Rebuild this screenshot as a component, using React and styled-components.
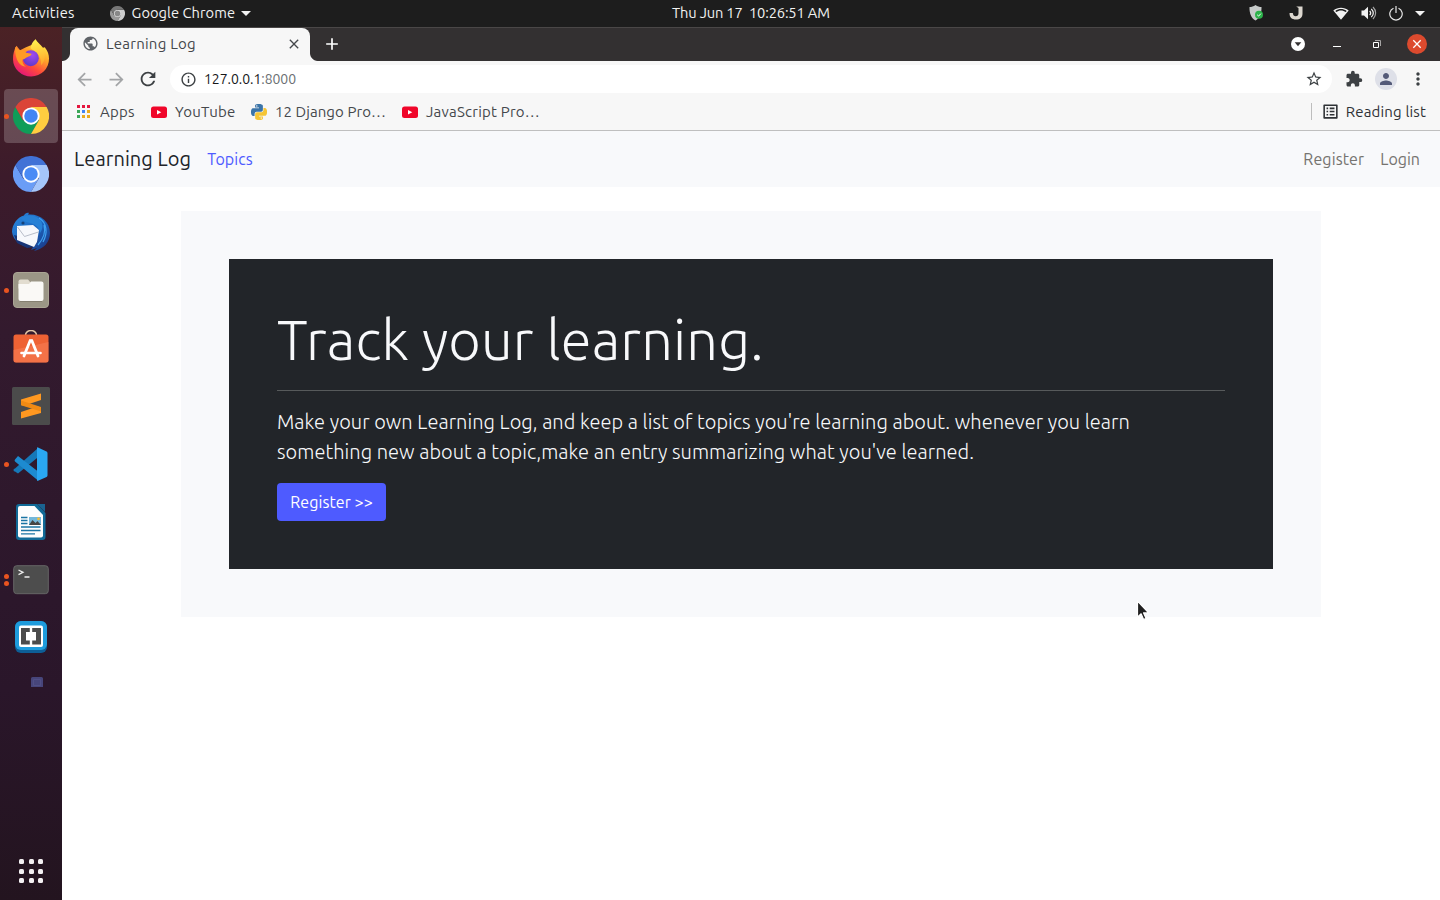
import React from 'react';
import styled, { createGlobalStyle } from 'styled-components';
import {
  MdArrowBack,
  MdArrowForward,
  MdRefresh,
  MdInfoOutline,
  MdStarBorder,
  MdExtension,
  MdPerson,
  MdMoreVert,
  MdPublic,
  MdListAlt,
  MdClose,
  MdAdd,
} from 'react-icons/md';

const GlobalStyle = createGlobalStyle`
  *, *::before, *::after { box-sizing: border-box; }
  body {
    margin: 0;
    background: #fff;
    font-family: "Ubuntu", "Noto Sans", sans-serif;
    overflow: hidden;
  }
  svg { display: block; flex: none; }
`;

const Desktop = styled.div`
  position: relative;
  display: flex;
  flex-direction: column;
  width: 1440px;
  height: 900px;
`;

const Label = styled.span`
  font-size: ${(p) => p.$size || 15}px;
  letter-spacing: ${(p) => p.$track || 0}px;
  white-space: pre;
`;

/* ---------- system bar ---------- */

const SystemBar = styled.header`
  display: grid;
  grid-template-columns: 600px 1fr 600px;
  align-items: center;
  height: 27px;
  background: #1d1d1d;
  color: #f2f2f2;
`;

const SystemLeft = styled.div`
  display: flex;
  align-items: center;
  padding-left: 12px;
`;

const SystemText = styled(Label)`
  padding-bottom: 2px;
`;

const AppMenu = styled.div`
  display: flex;
  align-items: center;
  gap: 6px;
  margin-left: 35px;
`;

const AppName = styled(SystemText)`
  padding-left: 1px;
`;

const Clock = styled.div`
  display: flex;
  padding-left: 72px;
`;

const Tray = styled.div`
  display: flex;
  justify-content: flex-end;
  align-items: center;
  padding: 0 15px 1px 0;
`;

const TrayCell = styled.div`
  display: flex;
  justify-content: center;
  width: ${(p) => p.$w}px;
  margin-right: ${(p) => p.$after || 0}px;
`;

const Workspace = styled.div`
  display: flex;
  flex: 1;
  min-height: 0;
`;

/* ---------- dock ---------- */

const Dock = styled.nav`
  display: flex;
  flex-direction: column;
  gap: 4px;
  width: 62px;
  padding: 4px 4px 2px;
  background: linear-gradient(#4b2225 0%, #3c1b2b 17%, #331a2e 35%, #2e182c 55%, #2a162a 76%, #23141f 100%);
`;

const DockItem = styled.div`
  position: relative;
  display: flex;
  align-items: center;
  justify-content: center;
  height: 54px;
  border-radius: 4px;
  background: ${(p) => (p.$active ? 'rgba(255, 255, 255, 0.2)' : 'transparent')};
`;

const Running = styled.div`
  position: absolute;
  left: 0;
  top: 0;
  bottom: 0;
  display: flex;
  flex-direction: column;
  justify-content: center;
  gap: 2px;
`;

const Dot = styled.i`
  width: 5px;
  height: 5px;
  border-radius: 50%;
  background: #e95420;
`;

const PendingItem = styled.div`
  display: flex;
  justify-content: flex-end;
  padding: 8px 15px 0 0;
`;

const AppGrid = styled.div`
  display: grid;
  grid-template-columns: repeat(3, 5px);
  gap: 4.5px;
  place-content: center;
  height: 54px;
  margin-top: auto;
`;

const GridDot = styled.i`
  width: 5px;
  height: 5px;
  border-radius: 1.5px;
  background: #f3f0f2;
`;

/* ---------- browser ---------- */

const Browser = styled.div`
  display: flex;
  flex-direction: column;
  flex: 1;
  background: #fff;
`;

const TabStrip = styled.div`
  display: flex;
  align-items: stretch;
  height: 34px;
  border-top: 1px solid #4a4747;
  background: #333031;
`;

const Flare = styled.div`
  align-self: flex-end;
  width: 8px;
  height: 8px;
  background: radial-gradient(
    circle at ${(p) => (p.$side === 'left' ? '0 0' : '100% 0')},
    transparent 7.5px,
    #f7f7f7 8.5px
  );
`;

const Tab = styled.div`
  display: flex;
  align-items: center;
  width: 240px;
  padding: 0 8px 2px 12px;
  border-radius: 8px 8px 0 0;
  background: #f7f7f7;
  color: #45484c;
`;

const TabTitle = styled(Label)`
  flex: 1;
  padding-left: 7px;
`;

const NewTab = styled.div`
  display: flex;
  align-items: center;
  padding: 0 0 2px 4px;
  color: #fff;
`;

const WindowControls = styled.div`
  display: flex;
  align-items: center;
  margin-left: auto;
  padding: 0 3px 1px 0;
`;

const ControlCell = styled.div`
  display: flex;
  justify-content: center;
  width: 40px;
  padding-left: ${(p) => p.$shift || 0}px;
`;

const Toolbar = styled.div`
  display: flex;
  align-items: center;
  height: 36px;
  padding: 0 6px;
  background: #f7f7f7;
  color: #3c4043;
`;

const ToolCell = styled.div`
  display: flex;
  align-items: center;
  justify-content: center;
  width: 32px;
  color: ${(p) => (p.$muted ? '#a3a5a7' : 'inherit')};
`;

const AddressBar = styled.div`
  display: flex;
  align-items: center;
  flex: 1;
  height: 28px;
  margin: 0 6px;
  padding: 0 9px 0 9.5px;
  border-radius: 14px;
  background: #fff;
`;

const Url = styled(Label)`
  flex: 1;
  padding-left: 7.5px;
  color: #6b6f73;
`;

const Host = styled.span`
  color: #17181a;
`;

const Avatar = styled.div`
  display: flex;
  align-items: center;
  justify-content: center;
  width: 22px;
  height: 22px;
  border-radius: 50%;
  background: #dee0e8;
  color: #545a78;
`;

const BookmarksBar = styled.div`
  display: flex;
  align-items: center;
  height: 34px;
  padding: 0 14px 4px 15px;
  border-bottom: 1px solid #bfbfbf;
  background: #f7f7f7;
  color: #45484c;
`;

const Bookmark = styled.div`
  display: flex;
  align-items: center;
  gap: ${(p) => p.$gap || 8}px;
  width: ${(p) => p.$w}px;
`;

const ReadingList = styled.div`
  display: flex;
  align-items: center;
  gap: 6px;
  height: 17px;
  margin-left: auto;
  padding-left: 9px;
  border-left: 1px solid #bdbdbd;
  color: #2f3236;
`;

/* ---------- site ---------- */

const SiteNav = styled.nav`
  display: flex;
  align-items: center;
  height: 56px;
  padding: 0 20px 1px 12px;
  background: #f8f9fb;
`;

const Brand = styled(Label)`
  color: #212429;
`;

const NavLink = styled(Label)`
  margin-left: 16px;
  color: ${(p) => (p.$active ? '#4e5bff' : '#75736f')};
`;

const NavRight = styled.div`
  display: flex;
  margin-left: auto;
`;

const Container = styled.main`
  width: 1140px;
  margin: 24px 0 0 119px;
  padding: 48px;
  background: #f8f9fb;
`;

const Hero = styled.section`
  height: 310px;
  padding: 48px;
  background: #222529;
  color: #f8f9fb;
`;

const HeroTitle = styled.h1`
  margin: 0;
  font-size: 56px;
  font-weight: 300;
  line-height: 66px;
  padding-bottom: 1px;
  letter-spacing: 0.15px;
`;

const Rule = styled.hr`
  height: 1px;
  margin: 16px 0;
  border: 0;
  background: #575a5b;
`;

const Lead = styled.p`
  margin: 0 0 16px;
  font-size: 20px;
  font-weight: 300;
  line-height: 30px;
  letter-spacing: 0.05px;
  white-space: nowrap;
`;

const Button = styled.button`
  display: block;
  width: 109px;
  height: 38px;
  padding: 0;
  border: 0;
  border-radius: 4px;
  background: #4e5bff;
  color: #fff;
  font-family: inherit;
`;

const Pointer = styled.div`
  position: absolute;
  left: 1134px;
  top: 599px;
`;

/* ---------- drawings ---------- */

function ChromeLogo({ size, red = '#db4437', yellow = '#ffcd40', green = '#0f9d58', blue = '#4285f4', ring = '#fff' }) {
  return (
    <svg width={size} height={size} viewBox="0 0 48 48">
      <path fill={green} d="M13.6 30 3.2 12A24 24 0 0 0 24 48l10.4-18z" />
      <path fill={yellow} d="M34.4 30 24 48a24 24 0 0 0 20.8-36H24z" />
      <path fill={red} d="M24 12h20.8A24 24 0 0 0 3.2 12l10.4 18z" />
      <circle cx="24" cy="24" r="11.5" fill={ring} />
      <circle cx="24" cy="24" r="9" fill={blue} />
    </svg>
  );
}

const Firefox = () => (
  <svg width="38" height="38" viewBox="0 0.8 38 38">
    <defs>
      <linearGradient id="ff-body" x1=".85" y1=".1" x2=".3" y2="1">
        <stop offset="0" stopColor="#fff04a" />
        <stop offset=".35" stopColor="#ffa52a" />
        <stop offset=".68" stopColor="#ff4b3a" />
        <stop offset="1" stopColor="#e3157a" />
      </linearGradient>
      <linearGradient id="ff-flame" x1=".5" y1="0" x2=".6" y2="1">
        <stop offset="0" stopColor="#fff44f" />
        <stop offset="1" stopColor="#ffa52a" />
      </linearGradient>
      <radialGradient id="ff-core" cx=".6" cy=".3" r=".8">
        <stop offset="0" stopColor="#a04bf0" />
        <stop offset="1" stopColor="#5936c4" />
      </radialGradient>
    </defs>
    <path fill="url(#ff-body)" d="M4.500 7.500 8 12l6-3 8-3.200L23.500 1c2 3.400 5 5.200 7.500 8.500l1.800-.5C36 13 37 16.500 37 20.500A18 17.500 0 0 1 1 21c0-5 1-9.500 3.500-13.500z" />
    <path fill="url(#ff-flame)" d="M18.500 10c.5-4 2.500-7 5-9 1.500 4 6 6.500 8.500 12 2 5 .5 11-3 14 .5-5-1-9-4-12z" />
    <circle cx="18.800" cy="20" r="8" fill="url(#ff-core)" />
    <path fill="#ff9a26" d="M3 8.500c2 2.500 4 3.300 6.500 3.500 2-.8 3.800.5 4.500 2.500l5.500 1c0 2-2.500 2.500-4.500 3.500-2 1.300-2.500 2-4.500 2.200-.5 3 1 5.800 3.500 7.300-6-.5-11-5.500-11-20z" />
  </svg>
);

const Thunderbird = () => (
  <svg width="40" height="40" viewBox="0 0 40 40">
    <defs>
      <linearGradient id="tb" x1="0" y1="0" x2="1" y2="1">
        <stop offset="0" stopColor="#2a8ae0" />
        <stop offset=".55" stopColor="#1c63bd" />
        <stop offset="1" stopColor="#1b2f78" />
      </linearGradient>
    </defs>
    <path fill="url(#tb)" d="M1 20C1 12 7 5 13 3.500c1-2 3-3 5-2.500l-1 1.500c12-1 22 7 22 18.500 0 9-6 16-16 18l3-3-6 2 2-3C12 36 2 29 1 20z" />
    <path fill="#183577" d="m3 23 3 8 10 5 7-1 4-6z" />
    <path fill="#f7f8fc" d="m6 14 16-1 6 5-2 12-3 5-17-7z" />
    <path fill="none" stroke="#b8bdc9" strokeWidth="1" d="m6.500 15 7 9.500 14-4.500" />
    <path fill="#2781d6" d="M10 6c7-4 16-3 20 3 2 4 2 8-1 12-1-6-5-9-10-10-4-1-7-2-9-5z" />
    <path fill="none" stroke="#3fa1f0" strokeWidth="1.200" d="M28 6c8 5 9 15 4 24M33 13c2 7 0 13-6 20" />
    <circle cx="12" cy="11" r="1.600" fill="#174279" />
  </svg>
);

const Files = () => (
  <svg width="36" height="36" viewBox="0 0 36 36">
    <rect x=".5" y=".5" width="35" height="35" rx="3.500" fill="#9b9686" stroke="#aaa594" />
    <path fill="#e2ddd0" d="M5.500 9.500a2 2 0 0 1 2-2H15l2.500 3v6h-12z" />
    <path fill="#faf9f6" d="M5.500 12H16l2-2.500h10.500a2 2 0 0 1 2 2V27a2 2 0 0 1-2 2h-21a2 2 0 0 1-2-2z" />
    <path fill="#858071" d="M7 29h22v1H7z" />
  </svg>
);

const Software = () => (
  <svg width="36" height="36" viewBox="0 0 36 36">
    <path d="M12.500 6.500V5a5.500 4.500 0 0 1 11 0v1.500" fill="none" stroke="#e4c6a4" strokeWidth="1.500" />
    <rect x=".5" y="4.500" width="35" height="28" rx="2.500" fill="#ee6234" />
    <path fill="#f78058" d="M.5 20 35.500 12v18a2.500 2.500 0 0 1-2.500 2.500H3A2.500 2.500 0 0 1 .5 30z" opacity=".55" />
    <g stroke="#fff" strokeLinecap="round" fill="none">
      <path strokeWidth="2.800" d="m17.200 10.500-6.200 15.500M18.800 10.500l6.200 15.500" />
      <path strokeWidth="2.600" d="M8.500 23h19" />
    </g>
  </svg>
);

const Sublime = () => (
  <svg width="38" height="38" viewBox="0 0 38 38">
    <rect width="38" height="38" rx="1.500" fill="#4b4b4b" />
    <path fill="#ff9820" d="M9 12.500 29 6.500V13l-12 4 12 3.500V26L9 31.500V25l12-4L9 18z" />
    <path fill="#f08a14" d="M9 13.500 29 20v4.500L9 18.300z" />
  </svg>
);

const VsCode = () => (
  <svg width="36" height="36" viewBox="0 0 36 36">
    <path fill="#1678b8" d="m2 22.500 22.500-20 2 7.500L5 27.500 2 25.500a1.500 1.500 0 0 1 0-3z" />
    <path fill="#1d8bd0" d="M2 13.500 5 10l22 17-2 7.500L2 15.500a1.500 1.500 0 0 1 0-2z" />
    <path fill="#2aa7f2" d="m25 1.500 8 3.700c.8.4 1.500 1 1.500 2v22c0 1-.7 1.600-1.500 2l-8 3.600c-1 .5-1-.5-1-1.500V3c0-1 0-2 1-1.500z" />
  </svg>
);

const Writer = () => (
  <svg width="30" height="36" viewBox="0 0 30 36">
    <path fill="#116a97" d="M3 0h18l8.500 9V33a3 3 0 0 1-3 3H3a3 3 0 0 1-3-3V3a3 3 0 0 1 3-3z" />
    <path fill="#1a6391" d="M21 0h8v8z" />
    <path fill="#fdfdfd" d="M4 2h14.500L27 11v20.500a2 2 0 0 1-2 2H4a2 2 0 0 1-2-2V4a2 2 0 0 1 2-2z" />
    <path stroke="#1a74a4" strokeWidth="1.300" d="M5 13.500h6.500M5 16.500h6.500M5 19.500h6.500M5 23h19.500M5 26.500h19.500M5 29.800h14" />
    <path fill="#73b7d9" d="M13 13h12v8H13z" />
    <path fill="#454545" d="m13 21 3.500-5 3 3 2-2 3.500 4z" />
    <circle cx="22.500" cy="14.800" r="1.400" fill="#f5bd34" />
  </svg>
);

const Terminal = () => (
  <svg width="36" height="30" viewBox="0 0 36 30">
    <rect x=".7" y=".7" width="34.600" height="28" rx="3" fill="#4d4d4d" stroke="#656565" strokeWidth="1" />
    <path d="m5.500 5 4.500 2.300-4.500 2.300M11.500 12h5" fill="none" stroke="#ededed" strokeWidth="1.300" />
  </svg>
);

const Brackets = () => (
  <svg width="32" height="34" viewBox="0 0 32 34">
    <rect width="32" height="32" rx="6" fill="#0d5e96" />
    <rect width="32" height="29" rx="6" fill="#1e9bdc" />
    <rect x="4" y="4.500" width="24" height="21.500" rx="2" fill="#fff" />
    <path fill="#4c4c4c" d="M6 7h8.800v4h-3.800v8.500h3.800v4H6zM17.200 7H26v16.500h-8.800v-4H21V11h-3.800z" />
  </svg>
);

const Loading = () => (
  <svg width="12" height="10" viewBox="0 0 12 10">
    <path fill="#47457a" d="M0 1.500A1.500 1.500 0 0 1 1.500 0h9A1.500 1.500 0 0 1 12 1.500V10H0z" />
    <path fill="none" stroke="#55538a" d="M2.500 2.500h7v6h-7z" strokeWidth=".7" />
  </svg>
);

const Caret = () => (
  <svg width="10" height="5" viewBox="0 0 10 5">
    <path fill="#f2f2f2" d="M0 0h10L5 5z" />
  </svg>
);

const Shield = () => (
  <svg width="15" height="16" viewBox="0 0 15 16">
    <path fill="#c6cac9" d="M6.500 0c2 1.500 4 2 6 2 .2 6-1.500 11-6 13.500C2 13 .3 8 .5 2c2 0 4-.5 6-2z" />
    <circle cx="10" cy="9.800" r="4" fill="#2cb34a" />
    <path d="m8.200 9.800 1.400 1.300 2.300-2.500" fill="none" stroke="#fff" strokeWidth="1" />
  </svg>
);

const Updater = () => (
  <svg width="14" height="14" viewBox="0 0 14 14">
    <path fill="#dcd7cf" d="M7.200.5h6.300v7c0 4-2.500 6-6.500 6-4.200 0-6.500-2-6.500-6.500h3.300c.3 2.400 1.200 3.300 2.900 3.300 1.800 0 2.800-1 2.800-3V2z" />
  </svg>
);

const Wifi = () => (
  <svg width="16" height="13" viewBox="0 0 16 13">
    <path fill="#f2f2f2" d="M.3 3.500C5-.3 11-.3 15.700 3.500L8 12.800zm2 .4 1 1.200C6 3 10 3 12.700 5.100l1-1.200C10 1.300 6 1.300 2.300 3.900z" fillRule="evenodd" />
  </svg>
);

const Volume = () => (
  <svg width="16" height="14" viewBox="0 0 16 14">
    <path fill="#f2f2f2" d="M.5 4.500H3L7 .8v12.400L3 9.500H.5z" />
    <path fill="none" stroke="#f2f2f2" strokeWidth="1.200" d="M8.700 4.800c1.200 1.300 1.200 3.100 0 4.400M10.300 2.800c2.400 2.500 2.400 5.900 0 8.400" />
    <path fill="none" stroke="#a5a5a5" strokeWidth="1.200" d="M12 1c3.500 3.500 3.500 8.500 0 12" />
  </svg>
);

const Power = () => (
  <svg width="14" height="15" viewBox="0 0 14 15">
    <path fill="none" stroke="#e8e8e8" strokeWidth="1.200" d="M4.500 2.200a6.200 6.200 0 1 0 5 0M7 0v7" />
  </svg>
);

const TabSearch = () => (
  <svg width="14" height="14" viewBox="0 0 14 14">
    <circle cx="7" cy="7" r="7" fill="#fff" />
    <path fill="#333031" d="M3.700 5.200h6.600L7 9.200z" />
  </svg>
);

const Minimize = () => (
  <svg width="8" height="6" viewBox="0 0 8 6">
    <path fill="#fff" d="M0 5h8v1H0z" />
  </svg>
);

const Restore = () => (
  <svg width="8" height="8" viewBox="0 0 8 8">
    <path fill="none" stroke="#a7a5a5" d="M2 .5h5.500V6" />
    <path fill="none" stroke="#fff" d="M.5 2.500h5v5h-5z" />
  </svg>
);

const CloseWindow = () => (
  <svg width="20" height="20" viewBox="0 0 20 20">
    <circle cx="10" cy="10" r="10" fill="#dc4a2e" />
    <path stroke="#fff" strokeWidth="1.300" d="m6.300 6.300 7.400 7.400m0-7.400-7.400 7.400" />
  </svg>
);

const AppsIcon = () => (
  <svg width="14" height="14" viewBox="0 0 14 14">
    {['#e5173f', '#e5173f', '#e5173f', '#3aa757', '#4285f4', '#eaab20', '#3aa757', '#eaab20', '#eaab20'].map((c, i) => (
      <rect key={i} x={(i % 3) * 5} y={Math.floor(i / 3) * 5} width="3" height="3" fill={c} />
    ))}
  </svg>
);

const YouTube = () => (
  <svg width="16" height="12" viewBox="0 0 16 12">
    <rect y=".5" width="16" height="11.500" rx="2.500" fill="#f0062a" />
    <path fill="#fff" d="M6 4 10.300 6.300 6 8.500z" />
  </svg>
);

const Python = () => (
  <svg width="16" height="16" viewBox="0 0 24 24">
    <path
      fill="#3b74a8"
      d="M14.250.18l.9.200.73.260.590.300.450.320.340.340.250.340.160.330.100.300.040.260.020.200-.010.130V8.500l-.050.630-.130.550-.210.460-.260.380-.300.310-.330.250-.350.190-.350.140-.330.100-.300.070-.260.040-.210.020H8.770l-.690.050-.590.140-.500.220-.410.270-.330.320-.270.350-.200.360-.150.370-.100.350-.070.320-.040.270-.020.210v3.060H3.170l-.210-.030-.280-.070-.320-.120-.350-.180-.360-.260-.360-.360-.350-.460-.320-.590-.280-.730-.210-.880-.140-1.050-.050-1.230.060-1.220.160-1.040.240-.870.320-.710.360-.570.400-.440.420-.330.420-.240.400-.160.360-.100.320-.050.240-.010h.160l.060.010h8.160v-.830H6.180l-.010-2.750-.020-.370.050-.340.110-.310.170-.280.250-.260.310-.230.380-.200.440-.180.510-.150.580-.120.640-.100.710-.060.770-.040.840-.020 1.270.050zm-6.300 1.980l-.230.330-.080.410.080.410.230.340.330.220.410.090.410-.090.330-.220.230-.340.080-.410-.080-.410-.230-.330-.330-.220-.410-.090-.410.090z"
    />
    <path
      fill="#f5c535"
      d="M21.100 6.110l.280.060.320.120.350.180.360.270.360.350.350.470.320.590.280.730.210.880.140 1.040.050 1.230-.060 1.230-.160 1.040-.240.860-.320.710-.360.570-.400.450-.420.330-.420.240-.400.160-.360.090-.320.050-.240.020-.160-.010h-8.220v.820h5.840l.010 2.760.020.360-.050.340-.110.310-.170.290-.250.250-.310.240-.380.200-.440.170-.510.150-.580.130-.640.090-.710.070-.770.040-.840.010-1.270-.040-1.070-.140-.900-.200-.730-.250-.590-.300-.450-.330-.340-.340-.250-.340-.160-.330-.100-.300-.040-.250-.020-.200.010-.130v-5.340l.050-.640.130-.540.210-.460.260-.380.300-.320.330-.240.350-.200.350-.140.330-.100.300-.060.260-.040.210-.020.130-.010h5.840l.690-.050.590-.140.500-.210.410-.280.330-.320.270-.350.200-.360.150-.360.100-.350.070-.320.040-.280.020-.210V6.070h2.090l.140.010zm-6.470 14.250l-.230.330-.080.410.080.410.230.330.330.230.410.080.410-.080.330-.230.230-.330.080-.410-.080-.410-.230-.330-.330-.230-.410-.080-.410.080z"
    />
  </svg>
);

const Cursor = () => (
  <svg width="16" height="24" viewBox="0 0 16 24">
    <path
      fill="#202020"
      stroke="#fff"
      strokeWidth="1.200"
      strokeLinejoin="round"
      d="M3.500 2v16.200l3.600-3.400 2.500 5.700 2.500-1.100-2.500-5.500h5z"
    />
  </svg>
);

const dockApps = [
  { icon: <Firefox />, running: 0 },
  { icon: <ChromeLogo size={36} />, running: 1, active: true },
  { icon: <ChromeLogo size={36} red="#4172d6" yellow="#a5c6fb" green="#6a9df6" blue="#4a8bf5" />, running: 0 },
  { icon: <Thunderbird />, running: 0 },
  { icon: <Files />, running: 1 },
  { icon: <Software />, running: 0 },
  { icon: <Sublime />, running: 0 },
  { icon: <VsCode />, running: 1 },
  { icon: <Writer />, running: 0 },
  { icon: <Terminal />, running: 2 },
  { icon: <Brackets />, running: 0 },
];

export default function App() {
  return (
    <Desktop>
      <GlobalStyle />
      <SystemBar>
        <SystemLeft>
          <SystemText $size={14.67} $track={0.25}>Activities</SystemText>
          <AppMenu>
            <ChromeLogo size={15} red="#777" green="#999" yellow="#ccc" blue="#888" ring="#ddd" />
            <AppName $size={14.67} $track={0.05}>Google Chrome</AppName>
            <Caret />
          </AppMenu>
        </SystemLeft>
        <Clock>
          <SystemText $size={14.67} $track={-0.15}>{'Thu Jun 17  10:26:51 AM'}</SystemText>
        </Clock>
        <Tray>
          <TrayCell $w={40}><Shield /></TrayCell>
          <TrayCell $w={40} $after={5}><Updater /></TrayCell>
          <TrayCell $w={40}><Wifi /></TrayCell>
          <TrayCell $w={16}><Volume /></TrayCell>
          <TrayCell $w={38}><Power /></TrayCell>
          <TrayCell $w={10}><Caret /></TrayCell>
        </Tray>
      </SystemBar>

      <Workspace>
        <Dock>
          {dockApps.map((app, i) => (
            <DockItem key={i} $active={app.active}>
              <Running>
                {Array.from({ length: app.running }, (_, n) => (
                  <Dot key={n} />
                ))}
              </Running>
              {app.icon}
            </DockItem>
          ))}
          <PendingItem><Loading /></PendingItem>
          <AppGrid>
            {Array.from({ length: 9 }, (_, i) => (
              <GridDot key={i} />
            ))}
          </AppGrid>
        </Dock>

        <Browser>
          <TabStrip>
            <Flare $side="left" />
            <Tab>
              <MdPublic size={17} color="#5f6368" />
              <TabTitle $track={0.22}>Learning Log</TabTitle>
              <MdClose size={16} />
            </Tab>
            <Flare $side="right" />
            <NewTab><MdAdd size={20} /></NewTab>
            <WindowControls>
              <ControlCell $shift={2}><TabSearch /></ControlCell>
              <ControlCell><Minimize /></ControlCell>
              <ControlCell><Restore /></ControlCell>
              <ControlCell><CloseWindow /></ControlCell>
            </WindowControls>
          </TabStrip>

          <Toolbar>
            <ToolCell $muted><MdArrowBack size={21} /></ToolCell>
            <ToolCell $muted><MdArrowForward size={21} /></ToolCell>
            <ToolCell><MdRefresh size={22} /></ToolCell>
            <AddressBar>
              <MdInfoOutline size={17} />
              <Url $size={14} $track={-0.05}><Host>127.0.0.1</Host>:8000</Url>
              <MdStarBorder size={18} />
            </AddressBar>
            <ToolCell><MdExtension size={18} /></ToolCell>
            <ToolCell><Avatar><MdPerson size={18} /></Avatar></ToolCell>
            <ToolCell><MdMoreVert size={20} /></ToolCell>
          </Toolbar>

          <BookmarksBar>
            <Bookmark $w={74} $gap={9}>
              <AppsIcon />
              <Label $track={0.2}>Apps</Label>
            </Bookmark>
            <Bookmark $w={100}>
              <YouTube />
              <Label $track={0.22}>YouTube</Label>
            </Bookmark>
            <Bookmark $w={151}>
              <Python />
              <Label $track={0.07}>12 Django Pro…</Label>
            </Bookmark>
            <Bookmark $w={150}>
              <YouTube />
              <Label $track={0.22}>JavaScript Pro…</Label>
            </Bookmark>
            <ReadingList>
              <MdListAlt size={19} />
              <Label $track={0.15}>Reading list</Label>
            </ReadingList>
          </BookmarksBar>

          <SiteNav>
            <Brand $size={20} $track={0.08}>Learning Log</Brand>
            <NavLink $size={16} $track={0.05} $active>Topics</NavLink>
            <NavRight>
              <NavLink $size={16} $track={0.12}>Register</NavLink>
              <NavLink $size={16}>Login</NavLink>
            </NavRight>
          </SiteNav>

          <Container>
            <Hero>
              <HeroTitle>Track your learning.</HeroTitle>
              <Rule />
              <Lead>
                Make your own Learning Log, and keep a list of topics you're learning about. whenever you learn
                <br />
                something new about a topic,make an entry summarizing what you've learned.
              </Lead>
              <Button><Label $size={16} $track={0.08}>Register &gt;&gt;</Label></Button>
            </Hero>
          </Container>
        </Browser>
      </Workspace>
      <Pointer><Cursor /></Pointer>
    </Desktop>
  );
}
